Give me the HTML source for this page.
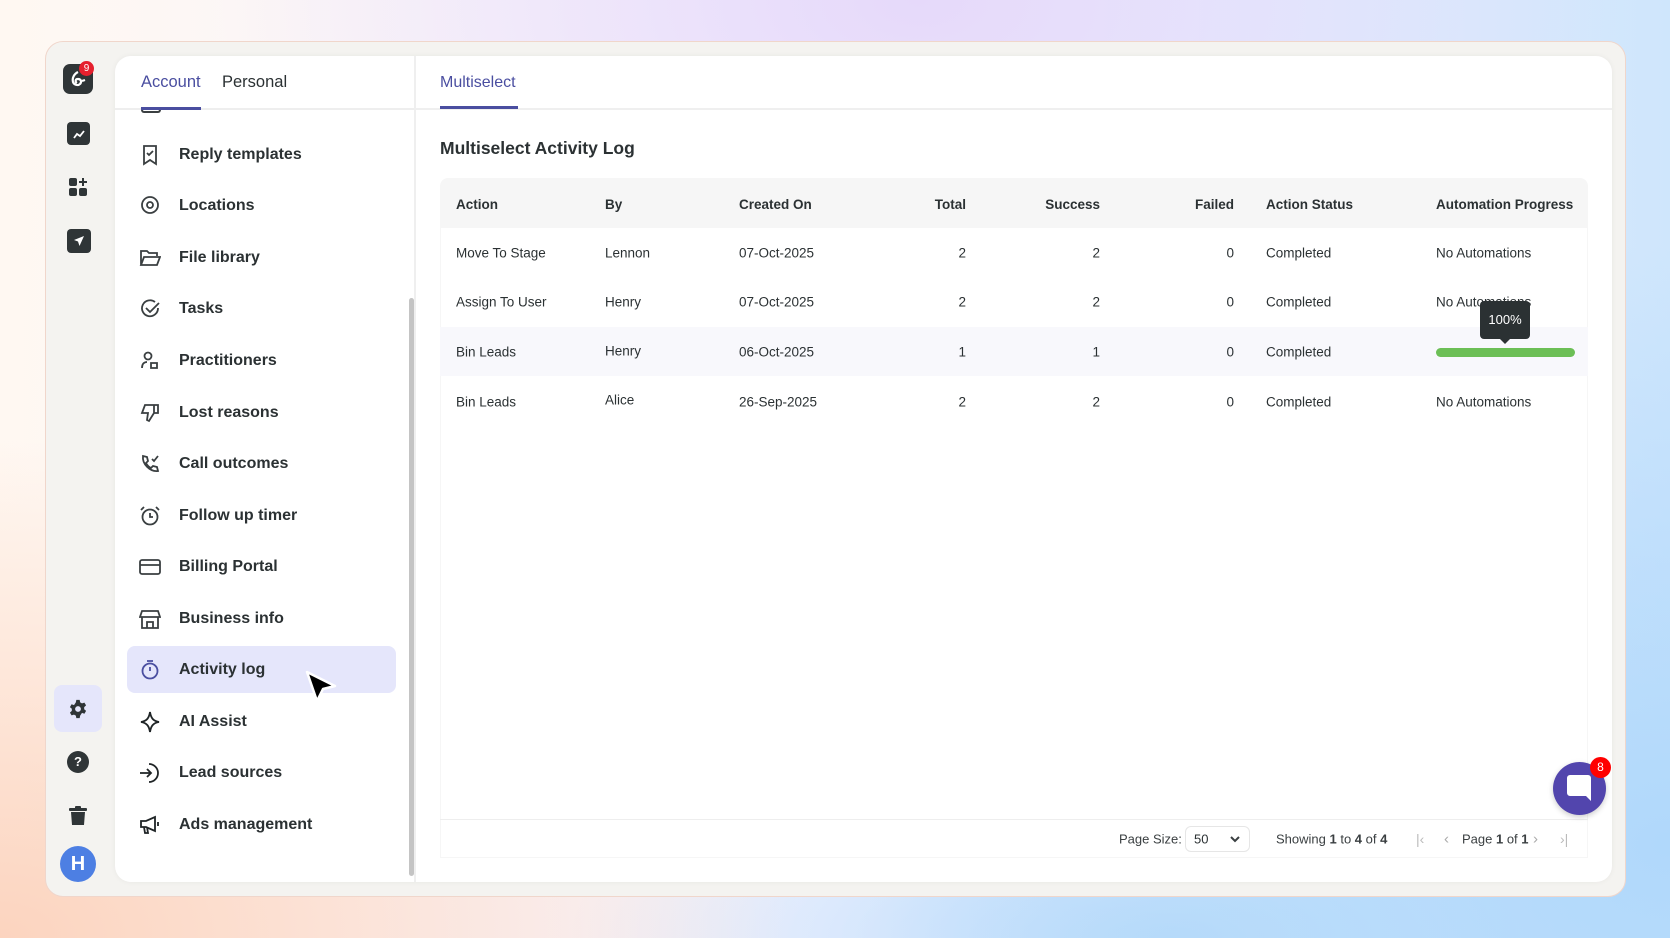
<!DOCTYPE html>
<html><head><meta charset="utf-8"><style>
*{box-sizing:border-box;margin:0;padding:0}
body{width:1670px;height:938px;overflow:hidden;font-family:"Liberation Sans",sans-serif;color:#2b3133;position:relative;
background:radial-gradient(ellipse 800px 500px at 0% 100%,#fcd4bf 0%,rgba(252,212,191,0) 100%),radial-gradient(ellipse 700px 400px at 55% 0%,#e6d9fa 0%,rgba(230,217,250,0) 100%),radial-gradient(ellipse 800px 600px at 100% 90%,#b0d8fb 0%,rgba(176,216,251,0) 100%),radial-gradient(ellipse 600px 200px at 70% 100%,#b8dbfa 0%,rgba(184,219,250,0) 100%),linear-gradient(90deg,#fff8f2,#f5f3ff 50%,#cfe6fc);}
.frame{position:absolute;left:45px;top:41px;width:1581px;height:856px;border-radius:18px;background:#f4f3f0;border:1px solid #f0d6cb}
.panel{position:absolute;left:115px;top:56px;width:1497px;height:826px;background:#fff;border-radius:16px;box-shadow:0 0 6px rgba(0,0,0,.05);overflow:hidden}
.rail{position:absolute;left:62px;width:32px;height:32px;border-radius:7px;background:#2f3537;display:flex;align-items:center;justify-content:center}
.abs{position:absolute}
.tab{position:absolute;top:73px;font-size:16.5px}
.menu{position:absolute;left:179px;font-size:16px;font-weight:bold;color:#2b3133;transform:translateY(-50%)}
.ic{position:absolute;left:139px;width:22px;height:22px;transform:translateY(-50%)}
.th{position:absolute;top:197px;font-size:13.5px;font-weight:bold;color:#2b3133}
.td{position:absolute;font-size:13.5px;color:#2b3133;transform:translateY(-50%)}
.r{text-align:right}
</style></head><body>
<div class="frame"></div>
<div class="panel"></div>
<div class="rail" style="top:64px;left:63px;width:30px;height:30px;">
<svg width="20" height="20" viewBox="0 0 20 20" fill="none" stroke="#fff" stroke-width="2.2"><path d="M10 3C6 5 4 9 5 13c1 3 5 4 7 2 2-2 1-5-2-5s-3 3-1 4"/><path d="M14 12l3-1"/></svg></div>
<div class="abs" style="left:79px;top:61px;width:15px;height:15px;border-radius:50%;background:#e5202e;color:#fff;font-size:10px;text-align:center;line-height:15px">9</div>
<div class="rail" style="top:122px;left:67px;width:23px;height:23px;border-radius:4px"><svg width="14" height="14" viewBox="0 0 14 14" fill="none" stroke="#fff" stroke-width="1.8"><path d="M2 11l3-4 3 2 4-5"/></svg></div>
<div class="abs" style="left:69px;top:178px"><svg width="20" height="20" viewBox="0 0 20 20" fill="#2f3537"><rect x="0" y="0" width="8" height="8" rx="2"/><rect x="0" y="10" width="8" height="8" rx="2"/><rect x="10" y="10" width="8" height="8" rx="2"/><path d="M13 0h2v3h3v2h-3v3h-2V5h-3V3h3z"/></svg></div>
<div class="rail" style="top:229px;left:67px;width:24px;height:24px;border-radius:4px"><svg width="12" height="12" viewBox="0 0 12 12" fill="#fff"><path d="M11 1L1 5l4 1.5L6.5 11z"/></svg></div>
<div class="abs" style="left:54px;top:685px;width:48px;height:47px;border-radius:8px;background:#e5e6fb"></div>
<div class="abs" style="left:68px;top:699px"><svg width="20" height="20" viewBox="0 0 24 24" fill="#2f3537"><path d="M10 1h4l.6 3 2.2 1.3 2.9-1 2 3.4-2.3 2v2.6l2.3 2-2 3.4-2.9-1L14.6 20 14 23h-4l-.6-3-2.2-1.3-2.9 1-2-3.4 2.3-2v-2.6l-2.3-2 2-3.4 2.9 1L9.4 4z"/><circle cx="12" cy="12" r="3.5" fill="#e5e6fb"/></svg></div>
<div class="abs" style="left:67px;top:751px;width:22px;height:22px;border-radius:50%;background:#2f3537;color:#fff;font-size:13px;font-weight:bold;text-align:center;line-height:22px">?</div>
<div class="abs" style="left:69px;top:806px"><svg width="18" height="20" viewBox="0 0 18 20" fill="#2f3537"><rect x="0" y="2" width="18" height="3" rx="1"/><rect x="6" y="0" width="6" height="3" rx="1"/><path d="M2 6h14l-1 13H3z"/></svg></div>
<div class="abs" style="left:60px;top:846px;width:36px;height:36px;border-radius:50%;background:#4d7fe3;color:#fff;font-weight:bold;font-size:20px;text-align:center;line-height:36px">H</div>
<div class="abs" style="left:115px;top:108px;width:300px;height:2px;background:#eeeeee"></div>
<div class="abs" style="left:414px;top:56px;width:2px;height:826px;background:#efefef"></div>
<div class="tab" style="left:141px;color:#4a4ea0">Account</div>
<div class="abs" style="left:141px;top:107px;width:60px;height:3px;background:#4a4ea0"></div>
<div class="tab" style="left:222px;color:#2b3133">Personal</div>
<div class="abs" style="left:141px;top:110px;width:20px;height:3px;border:2px solid #3a3f41;border-top:none;border-radius:0 0 3px 3px"></div>
<div class="abs" style="left:409px;top:298px;width:5px;height:578px;border-radius:3px;background:#c4c4c4"></div>
<div class="abs" style="left:127px;top:646px;width:269px;height:47px;border-radius:8px;background:#e5e6fb"></div>
<svg class="ic" style="top:155px" viewBox="0 0 22 22" fill="none" stroke="#3a3f41" stroke-width="1.8"><path d="M5 2h12v18l-6-4-6 4z"/><path d="M8 9l2 2 4-4"/></svg><div class="menu" style="top:155px">Reply templates</div>
<svg class="ic" style="top:206px" viewBox="0 0 22 22" fill="none" stroke="#3a3f41" stroke-width="1.8"><circle cx="11" cy="10" r="8"/><circle cx="11" cy="10" r="3"/></svg><div class="menu" style="top:206px">Locations</div>
<svg class="ic" style="top:258px" viewBox="0 0 22 22" fill="none" stroke="#3a3f41" stroke-width="1.8"><path d="M2 18V4h6l2 2h8v3M2 18l3-8h16l-3 8z"/></svg><div class="menu" style="top:258px">File library</div>
<svg class="ic" style="top:309px" viewBox="0 0 22 22" fill="none" stroke="#3a3f41" stroke-width="1.8"><path d="M19 10a8 8 0 1 1-3-6"/><path d="M7 10l4 4 9-9"/></svg><div class="menu" style="top:309px">Tasks</div>
<svg class="ic" style="top:361px" viewBox="0 0 22 22" fill="none" stroke="#3a3f41" stroke-width="1.8"><circle cx="9" cy="6" r="3.5"/><path d="M3 18c0-4 2-6 5-6M12 13h6v5h-6z"/></svg><div class="menu" style="top:361px">Practitioners</div>
<svg class="ic" style="top:413px" viewBox="0 0 22 22" fill="none" stroke="#3a3f41" stroke-width="1.8"><path d="M15 3H6L3 11h6l-1 7 2 1 5-8zM15 3h4v8h-4"/></svg><div class="menu" style="top:413px">Lost reasons</div>
<svg class="ic" style="top:464px" viewBox="0 0 22 22" fill="none" stroke="#3a3f41" stroke-width="1.8"><path d="M4 3l4 1 1 4-2 2c1 2 3 4 5 5l2-2 4 1 1 4c-8 1-16-7-15-15zM13 6l2 2 4-5"/></svg><div class="menu" style="top:464px">Call outcomes</div>
<svg class="ic" style="top:516px" viewBox="0 0 22 22" fill="none" stroke="#3a3f41" stroke-width="1.8"><circle cx="11" cy="12" r="7.5"/><path d="M11 8v4h3M2 5l3-3M20 5l-3-3"/></svg><div class="menu" style="top:516px">Follow up timer</div>
<svg class="ic" style="top:567px" viewBox="0 0 22 22" fill="none" stroke="#3a3f41" stroke-width="1.8"><rect x="1" y="4" width="20" height="14" rx="2"/><path d="M1 9h20"/></svg><div class="menu" style="top:567px">Billing Portal</div>
<svg class="ic" style="top:619px" viewBox="0 0 22 22" fill="none" stroke="#3a3f41" stroke-width="1.8"><path d="M3 3h16l2 6H1zM3 9v11h16V9M8 20v-6h6v6"/></svg><div class="menu" style="top:619px">Business info</div>
<svg class="ic" style="top:670px" viewBox="0 0 22 22" fill="none" stroke="#4a4ea0" stroke-width="1.8"><circle cx="11" cy="12" r="7.5"/><path d="M11 12V8M8 2h6"/></svg><div class="menu" style="top:670px">Activity log</div>
<svg class="ic" style="top:722px" viewBox="0 0 22 22" fill="none" stroke="#1f2426" stroke-width="1.8"><path d="M11 1c1 6 3 9 9 10-6 1-8 4-9 10-1-6-3-9-9-10 6-1 8-4 9-10z"/></svg><div class="menu" style="top:722px">AI Assist</div>
<svg class="ic" style="top:773px" viewBox="0 0 22 22" fill="none" stroke="#1f2426" stroke-width="1.8"><path d="M10 2a9 9 0 1 1 0 18M1 11h11M8 7l4 4-4 4"/></svg><div class="menu" style="top:773px">Lead sources</div>
<svg class="ic" style="top:825px" viewBox="0 0 22 22" fill="none" stroke="#1f2426" stroke-width="1.8"><path d="M2 7h5l9-4v14l-9-4H2zM5 13l1 6h3l-1-6M19 8v4"/></svg><div class="menu" style="top:825px">Ads management</div>
<svg class="abs" style="left:305px;top:670px" width="32" height="36" viewBox="0 0 32 36"><path d="M2 2l28 14-12 3-6 12z" fill="#000" stroke="#fff" stroke-width="2.5" stroke-linejoin="round"/></svg>
<div class="abs" style="left:416px;top:108px;width:1196px;height:2px;background:#efefef"></div>
<div class="tab" style="left:440px;color:#4a4ea0;font-size:16px;top:74px">Multiselect</div>
<div class="abs" style="left:440px;top:106px;width:78px;height:3px;background:#4a4ea0"></div>
<div class="abs" style="left:440px;top:138px;font-size:17.5px;font-weight:bold;color:#2b3133">Multiselect Activity Log</div>
<div class="abs" style="left:440px;top:178px;width:1148px;height:50px;background:#f6f6f6;border-radius:8px 8px 0 0"></div>
<div class="abs" style="left:440px;top:228px;width:1148px;height:630px;border:1px solid #f6f6f6;border-top:none"></div>
<div class="abs" style="left:440px;top:327px;width:1148px;height:49px;background:#f8f8fc"></div>
<div class="abs" style="left:440px;top:819px;width:1148px;height:1px;background:#eeeeee"></div>
<div class="th" style="left:456px">Action</div><div class="th" style="left:605px">By</div><div class="th" style="left:739px">Created On</div>
<div class="th r" style="left:866px;width:100px">Total</div><div class="th r" style="left:1000px;width:100px">Success</div><div class="th r" style="left:1134px;width:100px">Failed</div>
<div class="th" style="left:1266px">Action Status</div><div class="th" style="left:1436px">Automation Progress</div>
<div class="td" style="left:456px;top:253px">Move To Stage</div><div class="td" style="left:605px;top:253px">Lennon</div><div class="td" style="left:739px;top:253px">07-Oct-2025</div><div class="td r" style="left:866px;width:100px;top:253px">2</div><div class="td r" style="left:1000px;width:100px;top:253px">2</div><div class="td r" style="left:1134px;width:100px;top:253px">0</div><div class="td" style="left:1266px;top:253px">Completed</div><div class="td" style="left:1436px;top:253px">No Automations</div>
<div class="td" style="left:456px;top:302px">Assign To User</div><div class="td" style="left:605px;top:302px">Henry</div><div class="td" style="left:739px;top:302px">07-Oct-2025</div><div class="td r" style="left:866px;width:100px;top:302px">2</div><div class="td r" style="left:1000px;width:100px;top:302px">2</div><div class="td r" style="left:1134px;width:100px;top:302px">0</div><div class="td" style="left:1266px;top:302px">Completed</div><div class="td" style="left:1436px;top:302px">No Automations</div>
<div class="td" style="left:456px;top:352px">Bin Leads</div><div class="td" style="left:605px;top:351px">Henry</div><div class="td" style="left:739px;top:352px">06-Oct-2025</div><div class="td r" style="left:866px;width:100px;top:352px">1</div><div class="td r" style="left:1000px;width:100px;top:352px">1</div><div class="td r" style="left:1134px;width:100px;top:352px">0</div><div class="td" style="left:1266px;top:352px">Completed</div>
<div class="abs" style="left:1436px;top:348px;width:139px;height:9px;border-radius:5px;background:#6cbf56"></div>
<div class="abs" style="left:1480px;top:301px;width:50px;height:38px;border-radius:4px;background:#2b3133;color:#fff;font-size:13px;text-align:center;line-height:38px">100%</div>
<div class="abs" style="left:1499px;top:338px;width:0;height:0;border-left:6px solid transparent;border-right:6px solid transparent;border-top:6px solid #2b3133"></div>
<div class="td" style="left:456px;top:402px">Bin Leads</div><div class="td" style="left:605px;top:400px">Alice</div><div class="td" style="left:739px;top:402px">26-Sep-2025</div><div class="td r" style="left:866px;width:100px;top:402px">2</div><div class="td r" style="left:1000px;width:100px;top:402px">2</div><div class="td r" style="left:1134px;width:100px;top:402px">0</div><div class="td" style="left:1266px;top:402px">Completed</div><div class="td" style="left:1436px;top:402px">No Automations</div>
<div class="td" style="left:1119px;top:839px;font-size:13px;color:#3a3f41">Page Size:</div>
<div class="abs" style="left:1185px;top:826px;width:65px;height:26px;border:1px solid #e6e6e6;border-radius:6px"></div>
<div class="td" style="left:1194px;top:839px;font-size:13px">50</div>
<svg class="abs" style="left:1229px;top:834px" width="12" height="10" viewBox="0 0 12 10" fill="none" stroke="#3a3f41" stroke-width="2"><path d="M2 3l4 4 4-4"/></svg>
<div class="td" style="left:1276px;top:839px;font-size:13px;color:#3a3f41">Showing <b>1</b> to <b>4</b> of <b>4</b></div>
<div class="td" style="left:1416px;top:839px;font-size:14px;color:#bbb">|&lsaquo;</div>
<div class="td" style="left:1444px;top:839px;font-size:15px;color:#aaa">&lsaquo;</div>
<div class="td" style="left:1462px;top:839px;font-size:13px;color:#3a3f41">Page <b>1</b> of <b>1</b></div>
<div class="td" style="left:1533px;top:839px;font-size:15px;color:#aaa">&rsaquo;</div>
<div class="td" style="left:1560px;top:839px;font-size:14px;color:#bbb">&rsaquo;|</div>
<div class="abs" style="left:1553px;top:762px;width:53px;height:53px;border-radius:50%;background:#5245ad;box-shadow:0 2px 6px rgba(0,0,0,.2)"></div>
<svg class="abs" style="left:1566px;top:774px" width="26" height="28" viewBox="0 0 26 28"><path d="M4 1h18a3 3 0 0 1 3 3v23l-5-5H4a3 3 0 0 1-3-3V4a3 3 0 0 1 3-3z" fill="#fff"/></svg>
<div class="abs" style="left:1590px;top:757px;width:21px;height:21px;border-radius:50%;background:#f00;color:#fff;font-size:12px;text-align:center;line-height:21px">8</div>
</body></html>
